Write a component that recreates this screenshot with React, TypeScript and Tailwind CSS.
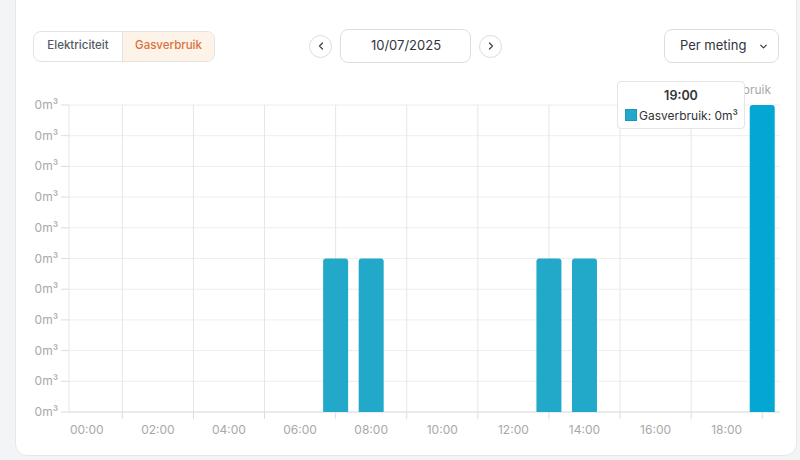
import { ChevronDown, ChevronLeft, ChevronRight } from 'lucide-react'

const font = { fontFamily: 'Inter, "Noto Sans", sans-serif' }

const hours = Array.from({ length: 20 }, (_, h) => h)
const values: Record<number, number> = { 7: 0.5, 8: 0.5, 13: 0.5, 14: 0.5, 19: 1 }

// svg origin sits at page (33, 77)
const plotLeft = 36
const plotRight = 747
const plotTop = 28
const plotBottom = 335
const band = (plotRight - plotLeft) / hours.length
const rows = Array.from({ length: 11 }, (_, i) => plotTop + ((plotBottom - plotTop) / 10) * i)

function bandCenter(h: number) {
  return plotLeft + band * (h + 0.5)
}

function UsageChart() {
  const barWidth = 25
  return (
    <svg width={747} height={372} className="block" style={font}>
      {rows.map((y, i) => (
        <g key={i}>
          <line x1={plotLeft} x2={plotRight} y1={y} y2={y} stroke="#eeeeee" strokeWidth={1} />
          <text x={25} y={y + 4} textAnchor="end" fontSize={12} fill="#a8a8a8">
            0m³
          </text>
          <line x1={28} x2={plotLeft} y1={y} y2={y} stroke="#dddddd" strokeWidth={1} />
        </g>
      ))}
      <line x1={plotLeft} x2={plotLeft} y1={plotTop} y2={plotBottom} stroke="#e6e6e6" />
      {hours
        .filter((h) => h % 2 === 1)
        .map((h) => (
          <g key={h}>
            <line x1={bandCenter(h)} x2={bandCenter(h)} y1={plotTop} y2={plotBottom} stroke="#e6e6e6" />
            <line x1={bandCenter(h)} x2={bandCenter(h)} y1={plotBottom} y2={plotBottom + 7} stroke="#dddddd" />
          </g>
        ))}
      <line x1={plotLeft} x2={plotRight} y1={plotBottom} y2={plotBottom} stroke="#dddddd" />
      {hours.map((h) => {
        const v = values[h]
        if (!v) return null
        const top = plotBottom - (plotBottom - plotTop) * v
        const x = bandCenter(h) - barWidth / 2
        const r = 3
        const d = `M${x},${plotBottom} V${top + r} Q${x},${top} ${x + r},${top} H${x + barWidth - r} Q${x + barWidth},${top} ${x + barWidth},${top + r} V${plotBottom} Z`
        return <path key={h} d={d} fill={h === 19 ? '#04a7d1' : '#22a8c9'} />
      })}
      {hours
        .filter((h) => h % 2 === 0)
        .map((h) => (
          <text key={h} x={bandCenter(h)} y={357} textAnchor="middle" fontSize={12} fill="#a8a8a8">
            {String(h).padStart(2, '0')}:00
          </text>
        ))}
      <rect x={656} y={8} width={10} height={10} fill="#22a8c9" />
      <text x={738} y={17} textAnchor="end" fontSize={12} fill="#a8a8a8">
        Gasverbruik
      </text>
    </svg>
  )
}

export default function App() {
  return (
    <div className="h-[460px] w-[800px] overflow-hidden bg-[#f3f4f6] pl-[15px] pr-[3px]" style={font}>
      <div className="relative -mt-4 h-[472px] rounded-xl border border-[#e5e7eb] bg-white pl-[17px] pr-[16px] pt-[44px]">
        <div className="grid h-[34px] grid-cols-3 items-center pr-[1px]">
          <div className="flex h-[31px] w-[182px] overflow-hidden rounded-lg border border-[#e3e3e3] text-[11.5px] font-medium">
            <button className="w-[89px] border-r border-[#e3e3e3] text-[#525a66]">Elektriciteit</button>
            <button className="flex-1 bg-[#fdf3e8] text-[#d9713e]">Gasverbruik</button>
          </div>
          <div className="flex items-center gap-2 justify-self-center">
            <button className="flex h-[23px] w-[23px] items-center justify-center rounded-full border border-[#dcdcdc] text-[#444]">
              <ChevronLeft size={12} strokeWidth={2.5} />
            </button>
            <div className="flex h-[34px] w-[131px] items-center justify-center rounded-lg border border-[#dedede] text-[13px] text-[#2f3540]">
              10/07/2025
            </div>
            <button className="flex h-[23px] w-[23px] items-center justify-center rounded-full border border-[#dcdcdc] text-[#444]">
              <ChevronRight size={12} strokeWidth={2.5} />
            </button>
          </div>
          <div className="flex h-[34px] w-[115px] items-center gap-[12px] justify-self-end whitespace-nowrap rounded-lg border border-[#dedede] pl-[15px] text-[13px] text-[#2f3540]">
            Per meting
            <ChevronDown size={11} strokeWidth={2.5} />
          </div>
        </div>
        <div className="mt-[14px]">
          <UsageChart />
        </div>
        <div className="absolute left-[601px] top-[96px] flex h-[48px] w-[128px] flex-col items-center justify-center gap-[3px] whitespace-nowrap rounded border border-[#e5e5e5] bg-white text-[12px] leading-[17px] text-[#333]">
          <div className="text-[12.5px] font-semibold">19:00</div>
          <div className="flex items-center gap-[2px] self-start pl-[7px]">
            <span className="h-[12px] w-[12px] border border-[#1b97b6] bg-[#22a8c9]" />
            Gasverbruik: 0m³
          </div>
        </div>
      </div>
    </div>
  )
}
